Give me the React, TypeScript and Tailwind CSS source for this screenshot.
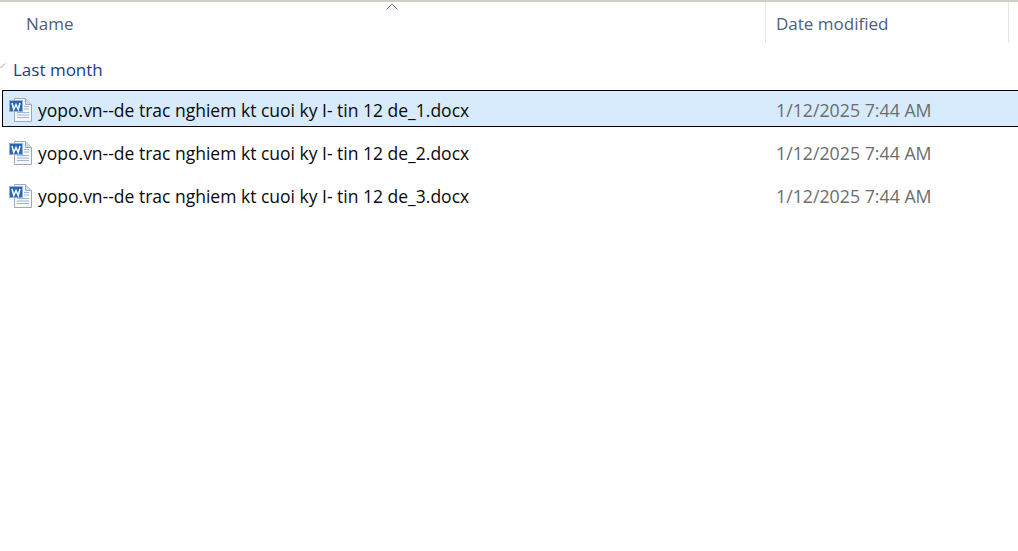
const files = [
  "yopo.vn--de trac nghiem kt cuoi ky I- tin 12 de_1.docx",
  "yopo.vn--de trac nghiem kt cuoi ky I- tin 12 de_2.docx",
  "yopo.vn--de trac nghiem kt cuoi ky I- tin 12 de_3.docx",
];

function WordIcon() {
  return (
    <svg width="24" height="24" viewBox="0 0 24 24" className="mt-[2px] shrink-0">
      <path d="M5.5 0.5H16.5L22.5 6.5V23.5H5.5Z" fill="#f6f8fc" stroke="#9aa9c0" />
      <path d="M16.5 0.5V6.5H22.5" fill="#cfdcec" stroke="#9aa9c0" />
      <path d="M15 8.5H20M15 11H20M8 14.5H20M8 17H20M8 19.5H20" stroke="#9db4d4" />
      <rect x="0.5" y="2.5" width="13" height="11" fill="#2a66b8" stroke="#8fb0dc" />
      <path d="M3 5L4.8 11.5L7 6.5L9.2 11.5L11 5" fill="none" stroke="#fff" strokeWidth="1.5" />
    </svg>
  );
}

function Row({ name, selected }: { name: string; selected?: boolean }) {
  return (
    <div
      className={`ml-[2px] flex h-[37px] w-[1020px] items-center border ${
        selected ? "border-black bg-[#d7ebfc]" : "border-transparent"
      }`}
    >
      <div className="flex w-[763px] shrink-0 items-center gap-[5px] pl-[6px]">
        <WordIcon />
        <span className="pt-[4px] text-[17.5px] text-[#0a0a0a]">{name}</span>
      </div>
      <span className="pl-[10px] pt-[4px] text-[17.75px] text-[#6d6d6d]">1/12/2025 7:44 AM</span>
    </div>
  );
}

export default function App() {
  return (
    <div className="h-[551px] w-[1018px] overflow-hidden bg-white font-['Open_Sans','Noto_Sans',sans-serif] text-[17px]">
      <div className="h-[2px] bg-[#c8d2c8]" />
      <div className="relative flex h-[41px] text-[#4c607a]">
        <div className="flex w-[765px] items-center pl-[26px] pt-[2px]">Name</div>
        <div className="flex w-[244px] items-center border-x border-[#e5e5e5] pl-[10px] pt-[2px]">Date modified</div>
        <svg width="12" height="7" viewBox="0 0 12 7" className="absolute left-[386px] top-[1px]">
          <path d="M0.5 6.5L6 1L11.5 6.5" fill="none" stroke="#777" />
        </svg>
      </div>
      <div className="relative flex h-[47px] items-center pl-[13px] pt-[6px] text-[#1c3a8c]">
        <svg width="6" height="6" viewBox="0 0 6 6" className="absolute left-0 top-[20px]">
          <path d="M0.5 5L5 0.5" stroke="#999" />
        </svg>
        Last month
      </div>
      <div className="flex flex-col gap-[6px]">
        {files.map((name, i) => (
          <Row key={name} name={name} selected={i === 0} />
        ))}
      </div>
    </div>
  );
}
